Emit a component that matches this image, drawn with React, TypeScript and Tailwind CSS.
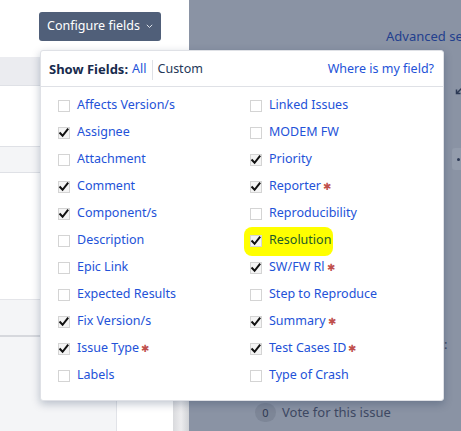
import React from "react";

type Field = { name: string; checked: boolean; required?: boolean; highlight?: boolean };

const left: Field[] = [
  { name: "Affects Version/s", checked: false },
  { name: "Assignee", checked: true },
  { name: "Attachment", checked: false },
  { name: "Comment", checked: true },
  { name: "Component/s", checked: true },
  { name: "Description", checked: false },
  { name: "Epic Link", checked: false },
  { name: "Expected Results", checked: false },
  { name: "Fix Version/s", checked: true },
  { name: "Issue Type", checked: true, required: true },
  { name: "Labels", checked: false },
];

const right: Field[] = [
  { name: "Linked Issues", checked: false },
  { name: "MODEM FW", checked: false },
  { name: "Priority", checked: true },
  { name: "Reporter", checked: true, required: true },
  { name: "Reproducibility", checked: false },
  { name: "Resolution", checked: true, highlight: true },
  { name: "SW/FW Rl", checked: true, required: true },
  { name: "Step to Reproduce", checked: false },
  { name: "Summary", checked: true, required: true },
  { name: "Test Cases ID", checked: true, required: true },
  { name: "Type of Crash", checked: false },
];

function Box({ checked }: { checked: boolean }) {
  return (
    <svg width="12" height="12" viewBox="0 0 12 12" className="shrink-0">
      <rect x="0.5" y="0.5" width="11" height="11" fill={checked ? "#f4f4f4" : "#ffffff"} stroke="#d4d4d4" />
      {checked && (
        <path d="M2.2 6.2 L4.6 8.8 L9.6 2.4" fill="none" stroke="#111" strokeWidth="2" strokeLinecap="square" />
      )}
    </svg>
  );
}

function Row({ f }: { f: Field }) {
  return (
    <div className="relative h-[27px] flex items-center">
      {f.highlight && (
        <div className="absolute left-[-6px] top-[0px] w-[89px] h-[29px] bg-[#ffff00] rounded-[8px]" />
      )}
      <div className="relative flex items-center gap-[7px]">
        <Box checked={f.checked} />
        <span className={f.highlight ? "text-[#1e5a2a]" : "text-[#2352d8]"}>{f.name}</span>
        {f.required && <span className="text-[#c0504d] text-[10px] -ml-[5px] mt-[-1px]">✱</span>}
      </div>
    </div>
  );
}

export default function App() {
  return (
    <div
      className="relative w-[461px] h-[431px] overflow-hidden flex bg-white text-[12.5px]"
      style={{ fontFamily: "'Noto Sans', 'Open Sans', sans-serif" }}
    >
      {/* left panel */}
      <div className="w-[189px] h-full flex flex-col">
        <div className="h-[57px] pt-[12px] pl-[39px]">
          <div className="w-[122px] h-[29px] rounded-[3px] bg-[#505f79] text-white text-[12.5px] flex items-center justify-center gap-[6px]">
            <span>Configure fields</span>
            <svg width="7" height="5" viewBox="0 0 7 5"><path d="M0.8 0.8 L3.5 3.5 L6.2 0.8" fill="none" stroke="#dfe3ea" strokeWidth="1" /></svg>
          </div>
        </div>
        <div className="h-[29px] bg-[#ebecf0] border-b border-[#dfe1e6]" />
        <div className="h-[60px]" />
        <div className="h-[27px] bg-[#f4f5f7] border-y border-[#dfe1e6]" />
        <div className="h-[126px]" />
        <div className="h-[38px] bg-[#f4f5f7] border-t border-[#e4e5e9] border-b-2 border-b-[#d6d8dd]" />
        <div className="flex-1 flex">
          <div className="w-[117px] bg-[#f4f5f7] border-r border-[#e1e3e8]" />
          <div className="w-[56px] bg-white" />
          <div className="w-[16px] bg-gradient-to-r from-[#d9dadd] via-[#ececee] to-[#d0d2d6]" />
        </div>
      </div>

      {/* dimmed right area */}
      <div className="flex-1 h-full bg-[#8a93a4] relative">
        <div className="absolute left-[197px] top-[27px] text-[#23408e] text-[13px] whitespace-nowrap">Advanced search</div>
        <svg className="absolute left-[266px] top-[87px]" width="8" height="8" viewBox="0 0 8 8">
          <path d="M7 1 L1.5 6.5 M1.5 2.5 V6.5 H5.5" fill="none" stroke="#2d3a55" strokeWidth="1.5" />
        </svg>
        <div className="absolute left-[263px] top-[148px] w-[20px] h-[22px] rounded-[3px] bg-[#939cac] flex items-center pl-[5px]">
          <div className="w-[3px] h-[3px] rounded-full bg-[#2d3a55]" />
        </div>
        <div className="absolute left-[255px] top-[335px] text-[#3d4862] text-[13px]">:</div>
        <div className="absolute left-[66px] top-[403px] flex items-center gap-[6px] text-[#3d4862] text-[13px]">
          <div className="w-[21px] h-[19px] rounded-full bg-[#7d8697] flex items-center justify-center text-[11px] text-[#2f3a52]">0</div>
          <span>Vote for this issue</span>
        </div>
      </div>

      {/* popup */}
      <div className="absolute left-[40px] top-[50px] w-[404px] h-[351px] bg-white border border-[#dfe1e6] rounded-[3px] shadow-[0_3px_8px_rgba(9,30,66,0.25)]">
        <div className="h-[36px] pt-[2px] border-b border-[#dfe1e6] flex items-center justify-between pl-[8px] pr-[9px]">
          <div className="flex items-center">
            <span className="font-bold text-[#172b4d] text-[13px]">Show Fields:</span>
            <span className="ml-[4px] text-[#2352d8]">All</span>
            <span className="mx-[5px] w-px h-[20px] bg-[#dfe1e6]" />
            <span className="text-[#253858]">Custom</span>
          </div>
          <span className="text-[#2352d8]">Where is my field?</span>
        </div>
        <div className="grid grid-cols-[192px_1fr] pl-[17px] pt-[5px]">
          <div className="flex flex-col">
            {left.map((f) => (
              <Row key={f.name} f={f} />
            ))}
          </div>
          <div className="flex flex-col">
            {right.map((f) => (
              <Row key={f.name} f={f} />
            ))}
          </div>
        </div>
      </div>
    </div>
  );
}
